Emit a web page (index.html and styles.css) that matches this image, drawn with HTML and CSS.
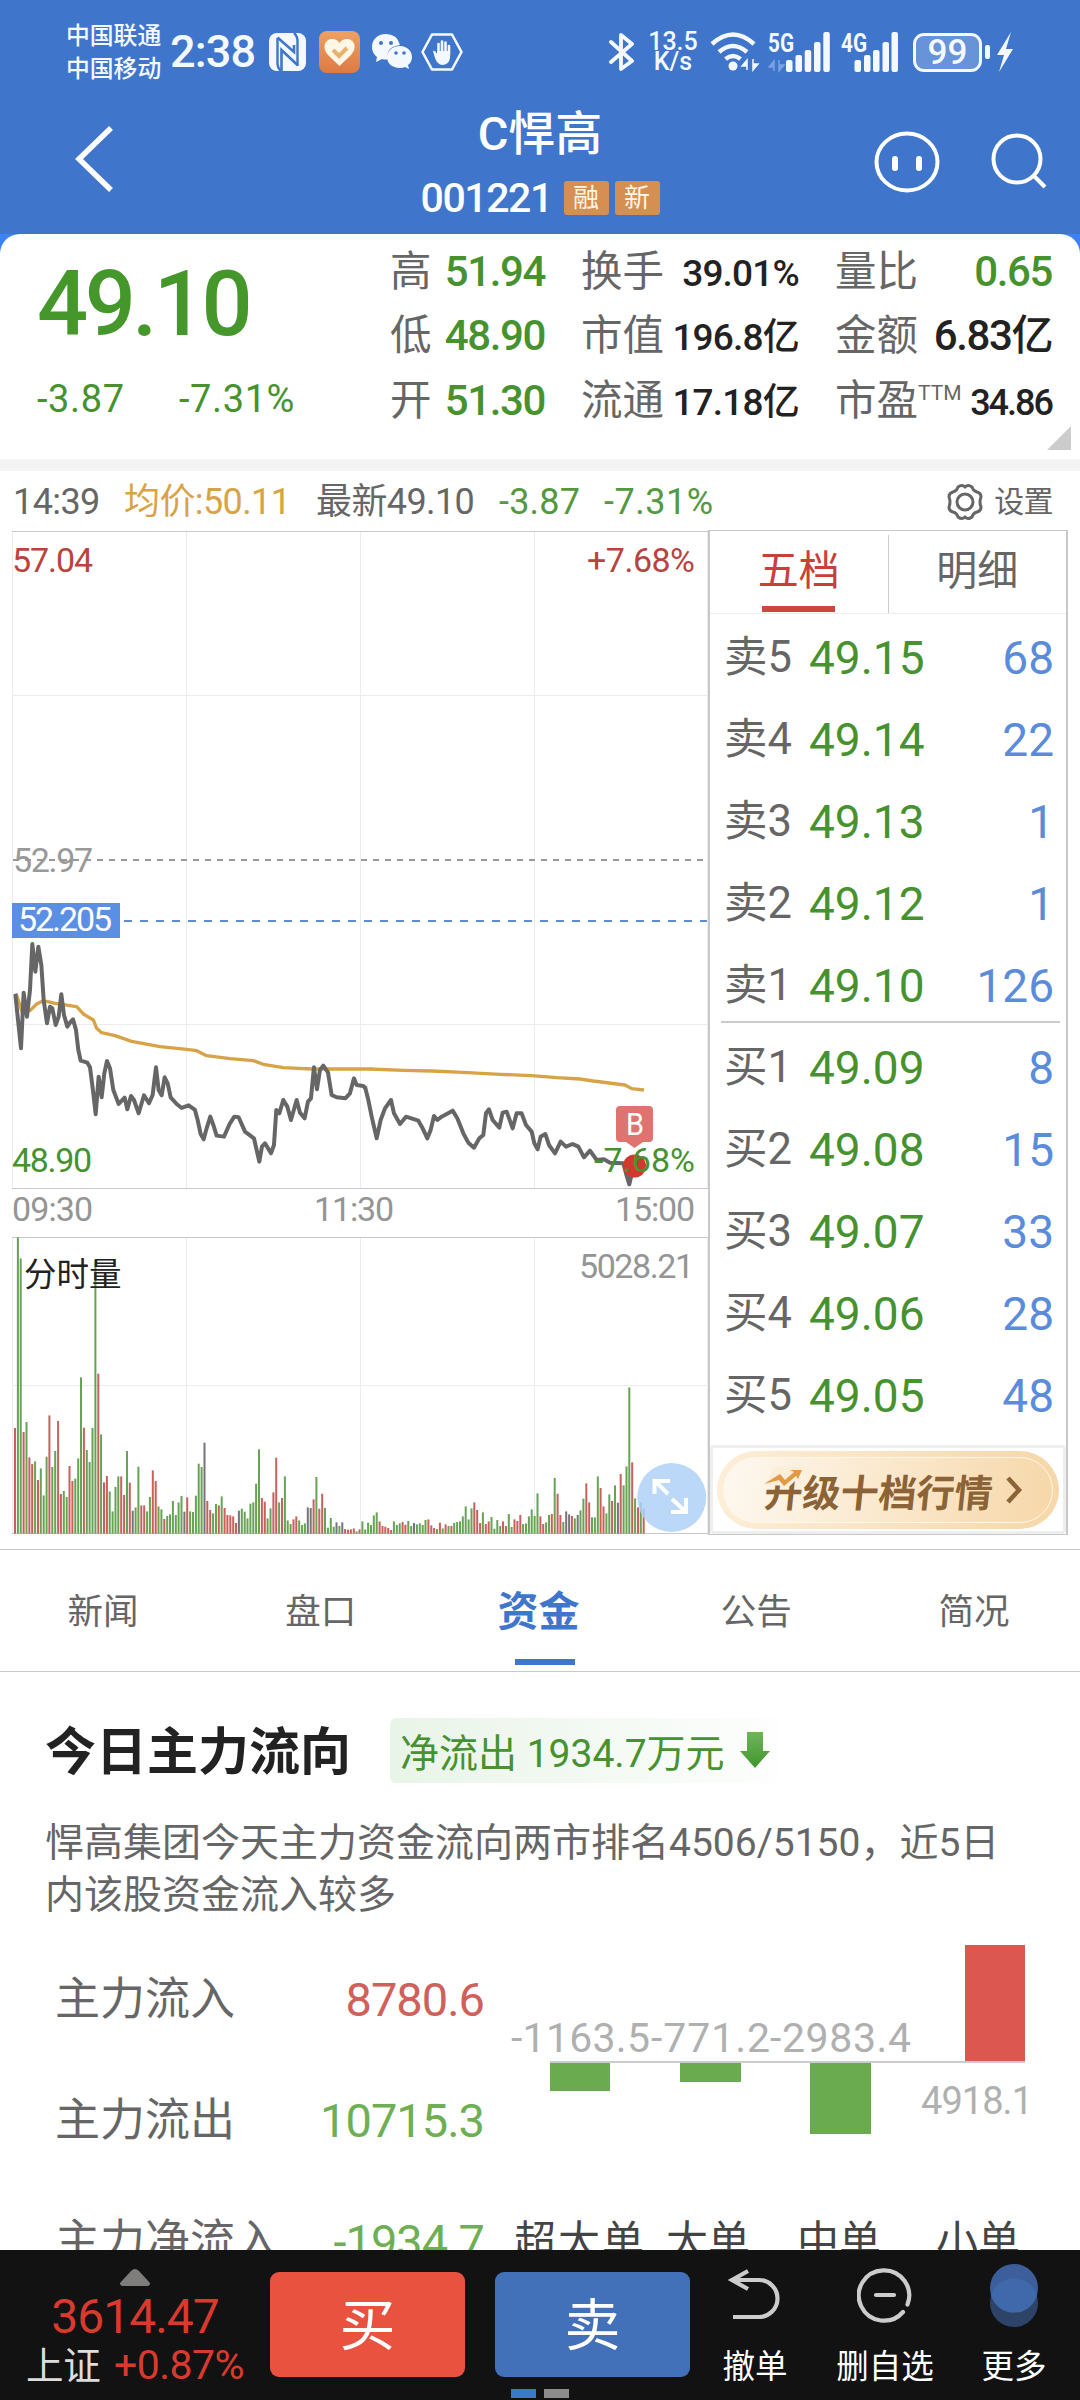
FILE: index.html
```html
<!DOCTYPE html>
<html lang="zh-CN">
<head>
    <meta charset="utf-8">
    <title>C悍高 001221</title>
    <link rel="stylesheet" href="styles.css">
</head>
<body>
    <header class="header">
        <div class="status">
            <div class="carriers">中国联通<br>中国移动</div>
            <div class="clock">2:38</div>
            <svg class="nfc" width="38" height="38" viewBox="0 0 38 38">
                <rect x="0" y="0" width="37" height="38" rx="8" fill="#f4f9ff"/>
                <path d="M8.500 5V31Q8.500 35 12 38M28.500 33V8Q28.500 3 25 0" fill="none" stroke="#3f76cc" stroke-width="2.400"/>
                <path d="M8.500 4.500L25 19V12M12.500 38V17L28.500 32" fill="none" stroke="#3f76cc" stroke-width="2.600"/>
            </svg>
            <svg class="heart" width="42" height="42" viewBox="0 0 42 42">
                <defs><linearGradient id="og" x1="0" y1="0" x2="0" y2="1"><stop offset="0" stop-color="#eea163"/><stop offset="1" stop-color="#dd7a43"/></linearGradient></defs>
                <rect width="41" height="42" rx="8" fill="url(#og)"/>
                <path d="M20.500 35L9 24C2 15 7 8 13 8Q18 8 20.500 12Q23 8 28 8C35 8 39 16 32 24Z" fill="#fff7e6"/>
                <path d="M14 19L20 25L28 17" fill="none" stroke="#eab070" stroke-width="4"/>
            </svg>
            <svg class="wechat" width="42" height="38" viewBox="0 0 42 38">
                <path d="M15 1C6 1 1 7 1 14Q1 20 6 24L5 29L11 26Q15 27 17 26Q14 14 29 12Q26 1 15 1Z" fill="#f4f9ff"/>
                <path d="M29 13C21 13 16 18 16 24C16 31 22 35 29 35Q32 35 34 34L38 36L37 32Q41 29 41 24C41 18 36 13 29 13Z" fill="#f4f9ff"/>
                <circle cx="10" cy="10" r="2" fill="#3f76cc"/><circle cx="20" cy="10" r="2" fill="#3f76cc"/>
                <circle cx="25" cy="20" r="1.800" fill="#3f76cc"/><circle cx="33" cy="20" r="1.800" fill="#3f76cc"/>
            </svg>
            <svg class="hand" width="42" height="38" viewBox="0 0 42 38">
                <path d="M11 1.500H31L40.500 19L31 36.500H11L1.500 19Z" fill="none" stroke="#f4f9ff" stroke-width="2.600" stroke-linejoin="round"/>
                <path d="M17.500 22V11M21 20V8.500M24.500 20V9.500M28 22V13" stroke="#f4f9ff" stroke-width="2.600" stroke-linecap="round"/>
                <path d="M12 18Q14 17 16 21V18H29V25Q28 32 21 32Q16 31 14 25Z" fill="#f4f9ff"/>
            </svg>
            <div class="spacer"></div>
            <svg class="bt" width="26" height="38" viewBox="0 0 26 38"><path d="M2 9L23 28L12 36V2L23 11L2 29" fill="none" stroke="#f4f9ff" stroke-width="3.800" stroke-linejoin="round" stroke-linecap="round"/></svg>
            <div class="speed">13.5<br>K/s</div>
            <svg class="wifi" width="50" height="40" viewBox="0 0 50 40">
                <path d="M2 12Q23 -7 44 12M9 20Q23 8 37 20M15.500 27Q23 21 30.500 27" fill="none" stroke="#f4f9ff" stroke-width="4.500"/>
                <circle cx="23" cy="34" r="4.500" fill="#f4f9ff"/>
                <path d="M37 38V28L32 34H37M43 27V38L48 32H43" fill="#f4f9ff" stroke="#f4f9ff" stroke-width="1.500"/>
            </svg>
            <svg class="signal" width="62" height="40" viewBox="0 0 62 40">
                <text x="0" y="20" class="net" textLength="26" lengthAdjust="spacingAndGlyphs">5G</text>
                <path d="M6 39V29L1 35H6M11 28V39L16 33H11" fill="#7ba2e2" stroke="#7ba2e2" stroke-width="1.500"/>
                <g fill="#f4f9ff"><rect x="18" y="28" width="6.500" height="12" rx="2"/><rect x="27.500" y="23" width="6.500" height="17" rx="2"/><rect x="36.700" y="18" width="6.500" height="22" rx="2"/><rect x="46" y="10" width="6.500" height="30" rx="2"/><rect x="55.300" y="0" width="6.500" height="40" rx="2"/></g>
            </svg>
            <svg class="signal two" width="58" height="40" viewBox="0 0 58 40">
                <text x="0" y="20" class="net" textLength="26" lengthAdjust="spacingAndGlyphs">4G</text>
                <g fill="#f4f9ff"><rect x="13.500" y="28" width="6.500" height="12" rx="2"/><rect x="23" y="23" width="6.500" height="17" rx="2"/><rect x="32" y="18" width="6.500" height="22" rx="2"/><rect x="41.500" y="10" width="6.500" height="30" rx="2"/><rect x="50.500" y="0" width="6.500" height="40" rx="2"/></g>
            </svg>
            <div class="battery">99</div>
            <div class="cap"></div>
            <svg class="bolt" width="16" height="40" viewBox="0 0 16 40"><path d="M14 0L0 23H7L2 40L16 17H9Z" fill="#f4f9ff"/></svg>
        </div>
        <div class="titlebar">
            <svg class="back" width="40" height="68" viewBox="0 0 40 68"><path d="M36 3L4 34L36 65" fill="none" stroke="#fff" stroke-width="5.500"/></svg>
            <div class="names">
                <div class="name">C悍高</div>
                <div class="code"><span>001221</span><i>融</i><i>新</i></div>
            </div>
            <div class="tools">
                <svg width="66" height="62" viewBox="0 0 66 62"><ellipse cx="33" cy="31" rx="30.500" ry="28.500" fill="none" stroke="#fff" stroke-width="4"/><path d="M21 28V37M45 28V37" stroke="#fff" stroke-width="6" stroke-linecap="round"/></svg>
                <svg width="58" height="60" viewBox="0 0 58 60"><circle cx="27" cy="28" r="23.500" fill="none" stroke="#fff" stroke-width="4"/><path d="M43 44L55 56" stroke="#fff" stroke-width="4"/></svg>
            </div>
        </div>
    </header>

    <div class="quote-wrap">
    <section class="quote">
        <div class="last">
            <div class="price">49.10</div>
            <div class="change"><span>-3.87</span><span>-7.31%</span></div>
        </div>
        <div class="col">
            <div class="stat"><label>高</label><b class="green">51.94</b></div>
            <div class="stat"><label>低</label><b class="green">48.90</b></div>
            <div class="stat"><label>开</label><b class="green">51.30</b></div>
        </div>
        <div class="col">
            <div class="stat"><label>换手</label><b class="small">39.01%</b></div>
            <div class="stat"><label>市值</label><b class="small">196.8亿</b></div>
            <div class="stat"><label>流通</label><b class="small">17.18亿</b></div>
        </div>
        <div class="col">
            <div class="stat"><label>量比</label><b class="green">0.65</b></div>
            <div class="stat"><label>金额</label><b>6.83亿</b></div>
            <div class="stat"><label>市盈<sup>TTM</sup></label><b class="tiny">34.86</b></div>
        </div>
        <div class="corner"></div>
    </section>
    </div>

    <div class="info">
        <span class="t1">14:39</span>
        <span class="t2">均价:50.11</span>
        <span class="t3">最新49.10</span>
        <span class="t4">-3.87</span>
        <span class="t5">-7.31%</span>
        <div class="spacer"></div>
        <svg width="38" height="38" viewBox="0 0 38 38">
            <path d="M12 4Q16 1 19 4Q22 1 26 4Q27 8 31 9Q35 10 35 14Q33 19 35 24Q35 28 31 29Q27 30 26 34Q22 37 19 34Q16 37 12 34Q11 30 7 29Q3 28 3 24Q5 19 3 14Q3 10 7 9Q11 8 12 4Z" fill="none" stroke="#666" stroke-width="3"/>
            <circle cx="19" cy="19" r="8" fill="none" stroke="#666" stroke-width="3"/>
        </svg>
        <span class="set">设置</span>
    </div>

    <div class="market">
        <svg class="chart" width="696" height="1005" viewBox="12 530 696 1005">
            <g stroke="#ececec" stroke-width="1">
                <path d="M12.500 531V1188M186.500 531V1188M360.500 531V1188M534.500 531V1188M707.500 531V1188M12 695.500H708M12 1024.500H708"/>
                <path d="M12.500 1238V1533M186.500 1238V1533M360.500 1238V1533M534.500 1238V1533M707.500 1238V1533M12 1385.500H708"/>
            </g>
            <path d="M12 531.500H708M12 1188.500H708M12 1237.500H708M12 1533.500H708" stroke="#c8c8c8"/>
            <path d="M13 860H707" stroke="#999" stroke-width="2" stroke-dasharray="6 6"/>
            <path d="M124 921H707" stroke="#5b8fc9" stroke-width="2" stroke-dasharray="8 8"/>
            <g fill="none" stroke="#d8a347" stroke-width="10" stroke-linejoin="round">
                <polyline transform="translate(0 830) scale(.3333)" points="48,490 58,520 66,545 90,542 110,522 130,512 165,520 230,530 250,552 280,570 290,595 305,608 345,617 395,634 480,650 560,658 590,662 620,677 690,686 760,692 790,703 850,713 935,717 1115,717"/>
                <polyline transform="translate(350 1000) scale(.3333)" points="60,207 160,211 245,213 340,217 450,223 545,227 620,233 690,237 730,243 825,255 845,266 882,270"/>
            </g>
            <g fill="none" stroke="#666" stroke-width="12" stroke-linejoin="round">
                <polyline transform="translate(0 830) scale(.3333)" points="46,492 54,570 63,655 71,488 81,560 90,480 97,342 106,425 115,350 124,405 131,510 141,580 150,530 157,535 167,585 176,560 184,493 192,555 202,590 210,578 219,568 228,600 235,660 242,692 262,698 270,712 280,790 287,853 296,740 305,802 313,730 321,693 330,715 340,780 356,822 374,803 382,838 393,798 402,810 416,850 432,796 447,820 458,795 468,712 476,780 485,796 494,742 503,760 512,802 530,822 545,834 566,826 585,840 593,870 602,912 611,928 620,895 631,860 640,885 650,917 672,920 690,880 703,860 716,862 735,905 762,925 770,960 778,995 786,950 795,940 813,970 822,945 829,840 838,850 850,810 862,830 873,870 890,810 900,848 914,865 924,815 933,805 942,712 951,778 960,720 970,707 984,727 995,795 1010,802 1036,805 1050,790 1062,745 1070,765 1090,768 1097,775"/>
                <polyline transform="translate(350 1000) scale(.3333)" points="45,260 55,300 65,350 80,415 92,360 105,325 123,300 132,340 150,372 168,350 205,362 218,385 232,415 242,390 252,348 262,360 275,350 308,332 322,355 340,400 355,428 372,443 388,415 400,405 408,340 417,328 428,360 448,383 458,338 470,335 488,385 500,340 515,340 528,375 545,395 553,430 563,448 572,410 586,402 597,435 615,460 632,425 648,440 668,432 685,440 702,472 720,452 740,480 762,478 780,488 820,490 828,520 838,553 848,510"/>
            </g>
            <circle cx="634.500" cy="1166" r="11.500" fill="#d0392d"/>
            <path d="M620 1106H649Q653 1106 653 1110V1138Q653 1142 649 1142H643L634.500 1148L626 1142H620Q616 1142 616 1138V1110Q616 1106 620 1106Z" fill="#df736f"/>
            <text class="n" x="626" y="1135" fill="#fff" style="font-size:32px" textLength="18" lengthAdjust="spacingAndGlyphs">B</text>
            <g class="n">
                <text x="12" y="572" fill="#b9433e" textLength="81">57.04</text>
                <text x="587" y="572" fill="#b9433e" textLength="108">+7.68%</text>
                <text x="13" y="872" fill="#999" textLength="80">52.97</text>
                <rect x="12" y="903" width="108" height="35" fill="#5b8fe3"/>
                <text x="18" y="931" fill="#fff" textLength="94">52.205</text>
                <text x="12" y="1172" fill="#46922f" textLength="80">48.90</text>
                <text x="594" y="1172" fill="#46922f" textLength="101">-7.68%</text>
                <text x="12" y="1221" fill="#959595" textLength="81">09:30</text>
                <text x="314" y="1221" fill="#959595" textLength="80">11:30</text>
                <text x="615" y="1221" fill="#959595" textLength="80">15:00</text>
            </g>
            <g id="volume"></g>
            <text class="n" x="579" y="1278" fill="#959595" textLength="115">5028.21</text>
            <text class="vol-name" x="24" y="1286">分时量</text>
            <circle cx="671.700" cy="1497.500" r="34.500" fill="#aed0f8" fill-opacity=".84"/>
            <path d="M654.500 1494V1481H670M655 1481L668 1494M671 1512H686V1498M686 1512L672 1499" fill="none" stroke="#fff" stroke-width="4"/>
        </svg>

        <div class="panel">
            <div class="panel-tabs"><div class="on">五档</div><div>明细</div></div>
            <div class="levels">
                <div class="level"><label>卖5</label><b>49.15</b><em>68</em></div>
                <div class="level"><label>卖4</label><b>49.14</b><em>22</em></div>
                <div class="level"><label>卖3</label><b>49.13</b><em>1</em></div>
                <div class="level"><label>卖2</label><b>49.12</b><em>1</em></div>
                <div class="level"><label>卖1</label><b>49.10</b><em>126</em></div>
                <div class="line"></div>
                <div class="level"><label>买1</label><b>49.09</b><em>8</em></div>
                <div class="level"><label>买2</label><b>49.08</b><em>15</em></div>
                <div class="level"><label>买3</label><b>49.07</b><em>33</em></div>
                <div class="level"><label>买4</label><b>49.06</b><em>28</em></div>
                <div class="level"><label>买5</label><b>49.05</b><em>48</em></div>
            </div>
            <div class="promo">
                <div class="pill">
                    <div class="pill-in">
                        <span>升级十档行情</span>
                        <svg width="18" height="28" viewBox="0 0 18 28"><path d="M3 2L14 14L3 26" fill="none" stroke="#8b6336" stroke-width="4.500"/></svg>
                        <svg class="trend" width="46" height="22" viewBox="0 0 46 22"><path d="M10 0H46L26 20L2 19Z" fill="#fdeed9"/><path d="M0 18L16 8L21 14L30 6L26 4H38L34 13L32 10L20 20L15 14Z" fill="#e29a47"/></svg>
                    </div>
                </div>
            </div>
        </div>
    </div>

    <nav class="tabs">
        <div>新闻</div><div>盘口</div><div class="on">资金</div><div>公告</div><div>简况</div>
    </nav>

    <section class="flow">
        <div class="flow-head">
            <h2>今日主力流向</h2>
            <div class="badge">净流出 1934.7万元
                <svg width="30" height="36" viewBox="0 0 30 36"><defs><linearGradient id="gg" x1="0" y1="0" x2="0" y2="1"><stop offset="0" stop-color="#6fb55b"/><stop offset="1" stop-color="#3f962c"/></linearGradient></defs><path d="M7 0H23V19H30L15 36L0 19H7Z" fill="url(#gg)"/></svg>
            </div>
        </div>
        <p>悍高集团今天主力资金流向两市排名4506/5150，近5日内该股资金流入较多</p>
        <div class="flow-body">
            <div class="flow-rows">
                <div><label>主力流入</label><b class="up">8780.6</b></div>
                <div><label>主力流出</label><b>10715.3</b></div>
                <div><label>主力净流入</label><b>-1934.7</b></div>
            </div>
            <svg class="bars" width="530" height="330" viewBox="510 1939 530 330">
                <path d="M550 2062H1025" stroke="#ccc" stroke-width="2"/>
                <g fill="#6aab4f"><rect x="550" y="2063" width="60" height="28"/><rect x="680" y="2063" width="61" height="19"/><rect x="810" y="2063" width="61" height="71"/></g>
                <rect x="965" y="1945" width="60" height="116" fill="#dc5750"/>
                <g class="bar-num">
                    <text x="511" y="2052" textLength="139">-1163.5</text>
                    <text x="651" y="2052" textLength="119">-771.2</text>
                    <text x="770" y="2052" textLength="141">-2983.4</text>
                    <text x="921" y="2114" textLength="112" style="font-size:38px">4918.1</text>
                </g>
                <g class="bar-name"><text x="514" y="2256" textLength="130">超大单</text><text x="666" y="2256">大单</text><text x="797" y="2256">中单</text><text x="936" y="2256">小单</text></g>
            </svg>
        </div>
    </section>

    <footer class="footer">
        <div class="index">
            <svg width="30" height="17" viewBox="0 0 30 17"><path d="M15 0Q17 0 19 2L30 14Q30 17 27 17H3Q0 17 0 14L11 2Q13 0 15 0Z" fill="#7f7c7c"/></svg>
            <div class="idx-num">3614.47</div>
            <div class="idx-pct"><label>上证</label>+0.87%</div>
        </div>
        <div class="btn buy">买</div>
        <div class="btn sell">卖</div>
        <div class="act a1">
            <svg width="56" height="60" viewBox="0 0 56 60"><path d="M21 5L5 14L21 23M5 14H32A18 18 0 0 1 32 51H6" fill="none" stroke="#ccc" stroke-width="4.200"/></svg>撤单
        </div>
        <div class="act a2">
            <svg width="56" height="60" viewBox="0 0 56 60"><path d="M50.500 38.500A25.200 25.200 0 1 0 46 46" fill="none" stroke="#ccc" stroke-width="4.200" stroke-linecap="round"/><path d="M19 29H37" stroke="#ccc" stroke-width="4.200" stroke-linecap="round"/></svg>删自选
        </div>
        <div class="act a3">
            <svg width="50" height="70" viewBox="0 0 50 70"><circle cx="25" cy="42" r="24" fill="#2d4468"/><circle cx="25" cy="27" r="24" fill="#3c5f9b"/><path d="M2 34.500A24 24 0 0 1 48 34.500A24 24 0 0 1 2 34.500Z" fill="#3f69aa"/></svg>更多
        </div>
        <div class="pager"><i></i><i></i></div>
    </footer>
    <script src="volume.js"></script>
</body>
</html>
```
FILE: styles.css
```css
* {
    box-sizing: border-box;
}
body {
    margin: 0;
    width: 1080px;
    height: 2400px;
    overflow: hidden;
    background: #fff;
    color: #666;
    font-family: Roboto, "Noto Sans CJK SC", sans-serif;
}
svg {
    display: block;
    flex: none;
}
b, em, i {
    font-weight: 400;
    font-style: normal;
}
.spacer {
    flex: 1;
}
.green {
    color: #46922f;
}

/* header */
.header {
    height: 234px;
    background: #3f76cc;
    color: #fff;
}
.status {
    height: 104px;
    padding-left: 66px;
    padding-right: 67px;
    display: flex;
    align-items: center;
    color: #f4f9ff;
    font-weight: 500;
}
.carriers {
    width: 96px;
    padding-top: 2px;
    font-size: 23.8px;
    line-height: 33px;
    white-space: nowrap;
}
.clock {
    width: 107px;
    padding-left: 8px;
    font-size: 45px;
    line-height: 50px;
    letter-spacing: -.8px;
}
.heart { margin-left: 12px; }
.wechat { margin-left: 10px; }
.hand { margin-left: 8px; }
.speed {
    width: 50px;
    margin-left: 13px;
    font-size: 25px;
    line-height: 20px;
    text-align: center;
}
.wifi { margin-left: 12px; }
.signal {
    margin-left: 8px;
    overflow: visible;
}
.signal.two { margin-left: 11px; }
.net {
    font-size: 25px;
    font-weight: 700;
    fill: #f4f9ff;
}
.battery {
    width: 69px;
    height: 39px;
    margin-left: 14px;
    border: 3px solid #f4f9ff;
    border-radius: 11px;
    background: #6893d8;
    font-size: 35px;
    line-height: 34px;
    text-align: center;
}
.cap {
    width: 5px;
    height: 14px;
    margin: 0 7px 0 3px;
    border-radius: 2px;
    background: #f4f9ff;
}
.titlebar {
    height: 130px;
    display: grid;
    grid-template-columns: 1fr auto 1fr;
}
.back {
    margin: 21px 0 0 75px;
}
.name {
    font-size: 47px;
    line-height: 60px;
    text-align: center;
    font-weight: 500;
}
.code {
    display: flex;
    align-items: center;
    height: 60px;
    margin-top: 4px;
    font-size: 41px;
    font-weight: 500;
}
.code span {
    width: 143px;
    letter-spacing: -1.4px;
}
.code i {
    width: 45px;
    height: 34px;
    margin-right: 6px;
    border-radius: 3px;
    background: #d58f52;
    color: #fff6e6;
    font-size: 26px;
    line-height: 34px;
    text-align: center;
}
.code i:last-child {
    margin-right: 0;
}
.tools {
    display: flex;
    justify-content: flex-end;
    gap: 50px;
    padding: 27px 32px 0 0;
}

/* quote */
.quote-wrap {
    background: #3b82f6;
}
.quote {
    position: relative;
    display: flex;
    height: 225px;
    padding: 6px 28px 0 37px;
    border-radius: 20px 20px 0 0;
    background: #fff;
}
.last {
    width: 353px;
    color: #46922f;
}
.price {
    height: 130px;
    color: #45972c;
    font-size: 90px;
    line-height: 130px;
    font-weight: 500;
    letter-spacing: -3.5px;
}
.change {
    display: flex;
    font-size: 38px;
    line-height: 58px;
}
.change span:first-child {
    width: 142px;
}
.change span {
    letter-spacing: .6px;
}
.col {
    width: 155px;
    margin-right: 36px;
}
.col:nth-child(3) { width: 218px; }
.col:nth-child(4) { width: 217px; margin-right: 0; }
.stat {
    display: flex;
    justify-content: space-between;
    height: 64.4px;
    line-height: 64px;
    font-size: 41.5px;
    white-space: nowrap;
}
.stat b {
    font-size: 42px;
    font-weight: 500;
    letter-spacing: -1.4px;
}
.stat b:not(.green) { color: #222; }
.stat .small {
    font-size: 37px;
    line-height: 67px;
    letter-spacing: -.8px;
}
.stat .tiny {
    font-size: 36px;
    line-height: 68px;
    letter-spacing: -2px;
}
.stat sup {
    position: relative;
    top: -15px;
    font-size: 21px;
    line-height: 0;
    vertical-align: baseline;
}
.corner {
    position: absolute;
    right: 9px;
    bottom: 9px;
    border-left: 24px solid transparent;
    border-bottom: 24px solid #ccc;
}

/* time line info */
.info {
    display: flex;
    align-items: center;
    height: 71px;
    border-top: 12px solid #f3f3f3;
    padding: 2px 27px 0 13px;
    font-size: 36px;
    line-height: 50px;
    letter-spacing: -.6px;
    white-space: nowrap;
}
.t1 { width: 111px; }
.t2 { width: 192px; color: #d8a347; }
.t3 { width: 183px; }
.t4 { width: 105px; color: #549840; letter-spacing: .2px; }
.t5 { color: #549840; letter-spacing: .5px; }
.set {
    margin-left: 10px;
    font-size: 30px;
}
.market {
    display: flex;
    height: 1005px;
    padding-left: 12px;
}
.n {
    font-size: 34px;
}
.vol-name {
    font-size: 32.5px;
    fill: #222;
}

/* order book */
.panel {
    width: 360px;
    border: 1px solid #c8c8c8;
    border-width: 1px 2px;
}
.panel-tabs {
    display: flex;
    height: 83px;
    border-bottom: 1px solid #eee;
}
.panel-tabs div {
    flex: 1;
    margin-top: 4px;
    font-size: 41px;
    line-height: 72px;
    text-align: center;
}
.panel-tabs .on {
    position: relative;
    border-right: 1px solid #ccc;
    color: #c8403a;
}
.panel-tabs .on::after {
    content: "";
    position: absolute;
    left: 52px;
    bottom: 1px;
    width: 73px;
    height: 6px;
    background: #d0453e;
}
.levels {
    height: 831px;
    padding: 3px 12px 0 14px;
}
.level {
    display: flex;
    height: 82px;
    font-size: 46px;
    line-height: 82px;
}
.level label {
    width: 85px;
    font-size: 43.5px;
}
.level b {
    color: #46922f;
}
.level em {
    margin-left: auto;
    color: #5b8bdb;
}
.line {
    height: 2px;
    margin: -6px -6px 4px -3px;
    background: #ccc;
}
.promo {
    height: 89px;
    padding: 3px 4px;
    border: 3px solid #eee;
    border-radius: 4px;
}
.pill {
    height: 78px;
    padding: 6px;
    border-radius: 39px;
    background: linear-gradient(90deg, #fdeed8, #f6d7a9);
}
.pill-in {
    position: relative;
    display: flex;
    align-items: center;
    height: 66px;
    padding-left: 41px;
    border: 1.5px solid #fff8e8;
    border-radius: 33px;
    background: linear-gradient(100deg, #fdf8f0, #fbe8cc 50%, #f6d7a9);
    color: #8b6336;
    font-size: 38px;
    font-weight: 700;
    white-space: nowrap;
}
.pill-in span {
    width: 240px;
    transform: skewX(-6deg);
}
.trend {
    position: absolute;
    left: 40px;
    top: 8px;
}

/* section tabs */
.tabs {
    display: flex;
    height: 123px;
    width: 1094px;
    margin: 14px 0 0 -6px;
    padding-right: 5px;
    border-top: 1px solid #c8c8c8;
    border-bottom: 1px solid #c8c8c8;
}
.tabs div {
    flex: 1;
    font-size: 35.5px;
    line-height: 124px;
    text-align: center;
}
.tabs .on {
    position: relative;
    color: #3f76cc;
    font-size: 41px;
    font-weight: 700;
}
.tabs .on::after {
    content: "";
    position: absolute;
    left: 85px;
    bottom: 6px;
    width: 60px;
    height: 6px;
    background: #3f76cc;
}

/* money flow */
.flow {
    height: 578px;
    overflow: hidden;
    padding: 46px 40px 0 45px;
}
.flow-head {
    display: flex;
    height: 65px;
}
.flow-head h2 {
    width: 345px;
    margin: 0;
    color: #222;
    font-size: 51px;
    line-height: 69px;
    font-weight: 700;
}
.badge {
    display: flex;
    align-items: center;
    justify-content: space-between;
    width: 389px;
    padding: 0 9px 2px 10px;
    border-radius: 6px;
    background: linear-gradient(90deg, #e9f4e8, #fdfefd);
    color: #46922f;
    font-size: 39px;
    white-space: nowrap;
}
.flow p {
    margin: 34px 0 0;
    width: 980px;
    font-size: 39px;
    line-height: 52px;
}
.flow-body {
    display: flex;
    margin-top: 18px;
}
.flow-rows {
    flex: none;
    width: 465px;
    padding: 0 26px 0 10px;
}
.flow-rows div {
    display: flex;
    justify-content: space-between;
    height: 121px;
    line-height: 122px;
    font-size: 45px;
    white-space: nowrap;
}
.flow-rows b {
    color: #6eaf54;
    font-size: 47px;
    letter-spacing: -1px;
}
.flow-rows .up {
    color: #d0605a;
}
.bar-num {
    fill: #b0b0b0;
    font-size: 41px;
}
.bar-name {
    fill: #444;
    font-size: 42px;
}

/* bottom bar */
.footer {
    position: relative;
    display: flex;
    height: 150px;
    background: #121212;
    color: #fff;
}
.index {
    width: 270px;
    padding-top: 19px;
    color: #da3a2d;
    text-align: center;
}
.index svg {
    margin: 0 auto;
}
.idx-num {
    font-size: 48px;
    line-height: 62px;
    letter-spacing: -1px;
}
.idx-pct {
    font-size: 41px;
    line-height: 34px;
    letter-spacing: -.5px;
    white-space: nowrap;
}
.idx-pct label {
    margin-right: 13px;
    color: #ddd;
    font-size: 37.5px;
    letter-spacing: 0;
}
.btn {
    width: 195px;
    height: 105px;
    margin: 22px 30px 0 0;
    border-radius: 9px;
    font-size: 56px;
    line-height: 108px;
    text-align: center;
}
.buy { background: #e9523e; }
.sell { background: #4271ba; margin-right: 0; }
.act {
    display: flex;
    flex-direction: column;
    align-items: center;
    width: 130px;
    font-size: 32.5px;
    line-height: 40px;
}
.act svg {
    margin: 16px 0 21px;
}
.act.a3 { width: 128px; }
.act.a3 svg { margin: 11px 0 16px; }
.pager {
    position: absolute;
    left: 511px;
    bottom: 2px;
    display: flex;
    gap: 8px;
}
.pager i {
    width: 25px;
    height: 9px;
    background: #3f76cc;
}
.pager i + i {
    background: #8c8c8c;
}
```
FILE: volume.js
```js
// one entry per minute: colour letter + top edge of the bar (base is 941)
var bars = ("R624 G52 G115 R636 G606 R712 R732 G724 R780 G745 G826 G710 R586 G741 G693 R603 R822 G813 G831 R738 " +
    "R783 G776 G715 G472 R623 G690 G726 G624 G120 R461 G643 R787 R768 G814 G874 G801 G769 R769 R825 G693 " +
    "R788 K872 G862 G740 R856 R856 G874 G831 R751 R783 G859 G868 R897 G888 G883 G843 G885 G847 G828 K875 " +
    "R832 G874 G876 G827 G731 G741 K668 R843 R870 G880 G852 R856 G829 R864 R885 R886 R889 R909 K872 G866 " +
    "G875 G895 G851 G847 G791 G688 R834 R845 G895 G865 R817 R713 G847 R834 G769 G901 G912 R898 R889 G901 " +
    "G915 G910 K862 K864 R838 G771 R866 R821 G864 G923 G894 G920 K907 G918 K907 R927 R929 R928 R925 G934 " +
    "R928 G904 G928 G908 G915 G886 G877 R904 R918 R920 R924 R930 G904 G915 G910 R906 R914 G903 G918 K909 " +
    "G913 G910 G915 G900 R898 R916 R924 G927 R908 G925 R913 G918 R918 G909 G906 G904 G889 G859 G898 G865 " +
    "R847 R870 R909 G877 R912 R904 G891 G926 G900 G918 R904 R918 G882 G921 R898 R903 R885 G912 G910 G889 " +
    "G868 G888 G820 R889 R912 G907 G885 R882 G774 R821 R885 G906 K874 K883 R888 G895 K885 G871 G836 R790 " +
    "R847 G892 G892 G769 R804 R859 G880 G823 R843 G796 K848 R762 G796 G739 G502 R727 G835 R862 G847 R866").split(" ");
var colors = { R: "#c9605c", G: "#67a354", K: "#77737a" };
var step = (643.7 - 15) / (bars.length - 1);
var out = "";
bars.forEach(function (b, i) {
    var h = (941 - b.slice(1)) / 3;
    out += '<rect x="' + (14 + i * step).toFixed(1) + '" y="' + (1533.7 - h).toFixed(1) +
        '" width="2" height="' + h.toFixed(1) + '" fill="' + colors[b[0]] + '"/>';
});
document.getElementById("volume").innerHTML = out;
```
